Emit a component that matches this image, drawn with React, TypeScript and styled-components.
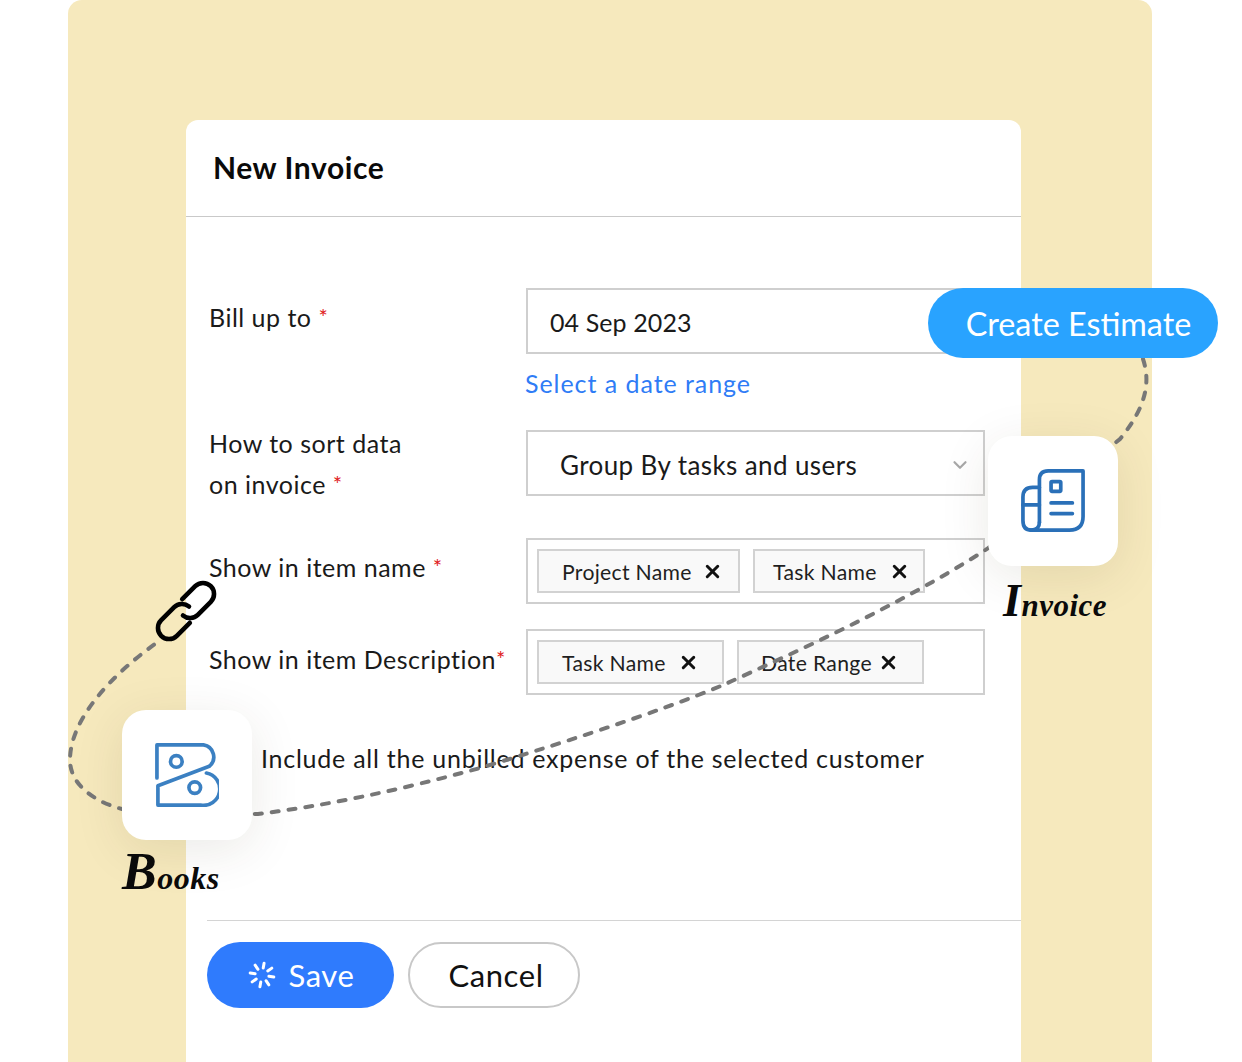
import React from 'react';
import styled, { createGlobalStyle } from 'styled-components';
import { ChevronDown, X } from 'lucide-react';

const GlobalStyle = createGlobalStyle`
  html, body {
    margin: 0;
    padding: 0;
    background: #ffffff;
  }
  body {
    font-family: "Lato", "Liberation Sans", sans-serif;
    color: #111111;
  }
`;

const Page = styled.div`
  position: relative;
  width: 1242px;
  height: 1062px;
  overflow: hidden;
  background: #ffffff;
`;

const Panel = styled.div`
  box-sizing: border-box;
  width: 1084px;
  height: 1062px;
  margin-left: 68px;
  padding: 120px 131px 0 118px;
  background: #f6e9bd;
  border-radius: 14px 14px 0 0;
`;

const Card = styled.div`
  height: 942px;
  background: #ffffff;
  border-radius: 12px 12px 0 0;
`;

const CardHeader = styled.div`
  box-sizing: border-box;
  height: 97px;
  padding: 28px 27px 0;
  border-bottom: 1px solid #c9c9c9;
  font-size: 30px;
  line-height: 38px;
  font-weight: 700;
  letter-spacing: 0.58px;
  color: #0a0a0a;
`;

const Form = styled.div`
  box-sizing: border-box;
  height: 703px;
  padding: 71px 0 0 23px;
`;

const Row = styled.div<{ $gap: number }>`
  display: grid;
  grid-template-columns: 317px 459px;
  margin-bottom: ${(p) => p.$gap}px;
`;

const Label = styled.div<{ $offset: number }>`
  margin-top: ${(p) => p.$offset}px;
  font-size: 25px;
  line-height: 41px;
  letter-spacing: 0.5px;
  color: #1a1a1a;
  white-space: nowrap;
`;

const Required = styled.span`
  position: relative;
  top: -2px;
  font-size: 22px;
  color: #e02020;
`;

const Field = styled.div`
  box-sizing: border-box;
  display: flex;
  align-items: center;
  height: 66px;
  border: 2px solid #cfcfcf;
  background: #ffffff;
`;

const DateField = styled(Field)`
  padding: 2px 0 0 22px;
  font-size: 25px;
  letter-spacing: 0.1px;
  color: #1a1a1a;
`;

const SelectField = styled(Field)`
  justify-content: space-between;
  padding: 3px 12px 0 32px;
  font-size: 26px;
  letter-spacing: 0.4px;
  color: #1a1a1a;
`;

const TagsField = styled(Field)`
  gap: 13px;
  padding-left: 9px;
`;

const Helper = styled.a`
  display: block;
  height: 30px;
  margin: 14px 0 1px -1px;
  font-size: 25px;
  line-height: 30px;
  letter-spacing: 0.95px;
  color: #2f7cf6;
`;

const Tag = styled.div<{ $width: number; $pad: number; $gap: number }>`
  box-sizing: border-box;
  display: flex;
  align-items: center;
  gap: ${(p) => p.$gap}px;
  width: ${(p) => p.$width}px;
  height: 44px;
  padding: 1px 0 0 ${(p) => p.$pad}px;
  background: #f9f9f9;
  border: 2px solid #d2d2d2;
  font-size: 21.2px;
  letter-spacing: 0.3px;
  color: #1f1f1f;
  white-space: nowrap;
`;

const TagClose = styled(X).attrs({ size: 21, strokeWidth: 3.4, color: '#111111' })`
  flex: none;
`;

const CheckRow = styled.div`
  margin-top: 43px;
  padding-left: 52px;
  font-size: 25px;
  line-height: 41px;
  letter-spacing: 0.75px;
  color: #1a1a1a;
  white-space: nowrap;
`;

const Footer = styled.div`
  display: flex;
  gap: 14px;
  margin-left: 21px;
  padding-top: 21px;
  border-top: 1px solid #d4d4d4;
`;

const SaveButton = styled.div`
  box-sizing: border-box;
  display: flex;
  align-items: center;
  justify-content: center;
  gap: 12px;
  width: 187px;
  height: 66px;
  padding-left: 2px;
  border-radius: 33px;
  background: #2f7bfd;
  color: #ffffff;
  font-size: 31px;
  letter-spacing: 0.6px;
`;

const CancelButton = styled.div`
  box-sizing: border-box;
  display: flex;
  align-items: center;
  justify-content: center;
  width: 172px;
  height: 66px;
  padding-left: 4px;
  border-radius: 33px;
  border: 2px solid #c8c8c8;
  background: #ffffff;
  color: #111111;
  font-size: 31px;
  letter-spacing: 0.6px;
`;

const Trail = styled.svg`
  position: absolute;
  inset: 0;
  pointer-events: none;
`;

const Pill = styled.div`
  box-sizing: border-box;
  position: absolute;
  left: 928px;
  top: 288px;
  width: 290px;
  height: 70px;
  padding-left: 11px;
  border-radius: 35px;
  background: #29a3ff;
  color: #ffffff;
  font-size: 32.3px;
  line-height: 72px;
  text-align: center;
`;

const Tile = styled.div<{ $left: number; $top: number }>`
  position: absolute;
  left: ${(p) => p.$left}px;
  top: ${(p) => p.$top}px;
  display: flex;
  align-items: center;
  justify-content: center;
  width: 130px;
  height: 130px;
  border-radius: 24px;
  background: #ffffff;
  box-shadow: 0 10px 50px rgba(60, 50, 20, 0.1);
`;

const Script = styled.div<{ $left: number; $top: number; $base: number; $cap: number }>`
  position: absolute;
  left: ${(p) => p.$left}px;
  top: ${(p) => p.$top}px;
  font-family: "Liberation Serif", serif;
  font-style: italic;
  font-weight: 700;
  font-size: ${(p) => p.$base}px;
  line-height: 1;
  letter-spacing: 0.5px;
  color: #0a0a0a;

  &::first-letter {
    font-size: ${(p) => p.$cap}px;
  }
`;

const ChainSpot = styled.svg`
  position: absolute;
  left: 157px;
  top: 582px;
  overflow: visible;
`;

const InvoiceIcon = () => (
  <svg width="64" height="64" viewBox="0 0 66 66" fill="none" stroke="#2a70b8" strokeWidth="3.8" strokeLinecap="round" strokeLinejoin="round">
    <path d="M19 55V11q0-9 9-9h36v47q0 14-14 14H10" />
    <path d="M19 19h-7Q2 19 2 29v24q0 10 8.500 10T19 55" />
    <path d="M2 37h17M31 35h22M31 46h22" />
    <rect x="31" y="13" width="10" height="10" rx="1" />
  </svg>
);

const BooksIcon = () => (
  <svg width="64" height="64" viewBox="0 0 66 66" fill="none" stroke="#3b80c2" strokeWidth="3.8" strokeLinecap="round" strokeLinejoin="round">
    <path d="M2 36V2h48a12.500 12.500 0 0 1 6 22L3 44v20h44a16.500 16.500 0 0 0 6-33" />
    <circle cx="22" cy="19" r="6" />
    <circle cx="41" cy="46" r="6" />
  </svg>
);

const Spinner = () => (
  <svg width="28" height="28" viewBox="0 0 28 28" fill="none" stroke="#ffffff" strokeWidth="3" strokeLinecap="round">
    {[10, 55, 100, 145, 190, 235, 280, 325].map((angle) => (
      <line key={angle} x1="14" y1="2" x2="14" y2="7" transform={`rotate(${angle} 14 14)`} />
    ))}
  </svg>
);

const App: React.FunctionComponent = () => (
  <Page>
    <GlobalStyle />
    <Panel>
      <Card>
        <CardHeader>New Invoice</CardHeader>
        <Form>
          <Row $gap={31}>
            <Label $offset={9}>
              Bill up to <Required>*</Required>
            </Label>
            <div>
              <DateField>04 Sep 2023</DateField>
              <Helper>Select a date range</Helper>
            </div>
          </Row>
          <Row $gap={32}>
            <Label $offset={-7}>
              How to sort data
              <br />
              on invoice <Required>*</Required>
            </Label>
            <SelectField>
              Group By tasks and users
              <ChevronDown size={22} color="#a8a8a8" strokeWidth={2.4} />
            </SelectField>
          </Row>
          <Row $gap={25}>
            <Label $offset={9}>
              Show in item name <Required>*</Required>
            </Label>
            <TagsField>
              <Tag $width={203} $pad={23} $gap={10}>
                Project Name <TagClose />
              </Tag>
              <Tag $width={172} $pad={18} $gap={12}>
                Task Name <TagClose />
              </Tag>
            </TagsField>
          </Row>
          <Row $gap={0}>
            <Label $offset={10}>Show in item Description<Required>*</Required></Label>
            <TagsField>
              <Tag $width={187} $pad={23} $gap={12}>
                Task Name <TagClose />
              </Tag>
              <Tag $width={187} $pad={22} $gap={6}>
                Date Range <TagClose />
              </Tag>
            </TagsField>
          </Row>
          <CheckRow>Include all the unbilled expense of the selected customer</CheckRow>
        </Form>
        <Footer>
          <SaveButton>
            <Spinner />
            Save
          </SaveButton>
          <CancelButton>Cancel</CancelButton>
        </Footer>
      </Card>
    </Panel>

    <Trail width="1242" height="1062" viewBox="0 0 1242 1062" fill="none">
      <path
        d="M1143 359C1150 380 1148 405 1120 439L987 549C900 605 800 650 723 685C660 712 540 750 480 768C400 790 330 805 258 814L122 809C95 802 70 785 70 760C70 720 110 675 162 639"
        stroke="#777777"
        strokeWidth="4"
        strokeDasharray="7 10"
        strokeLinecap="round"
      />
    </Trail>

    <Pill>Create Estimate</Pill>

    <Tile $left={988} $top={436}>
      <InvoiceIcon />
    </Tile>
    <Script $left={1003} $top={578} $base={31} $cap={46}>
      Invoice
    </Script>

    <Tile $left={122} $top={710}>
      <BooksIcon />
    </Tile>
    <Script $left={122} $top={846} $base={32} $cap={52}>
      Books
    </Script>

    <ChainSpot width="58" height="58" viewBox="0 0 58 58" fill="none" stroke="#000000" strokeWidth="4.6" strokeLinecap="round">
      <path d="M25.200 17.200L38.200 4.200A11 11 0 0 1 53.800 19.800L40.800 32.800A11 11 0 0 1 26 33.500" />
      <path d="M32.800 40.800L19.800 53.800A11 11 0 0 1 4.200 38.200L17.200 25.200A11 11 0 0 1 32 24.500" />
    </ChainSpot>
  </Page>
);

export default App;
